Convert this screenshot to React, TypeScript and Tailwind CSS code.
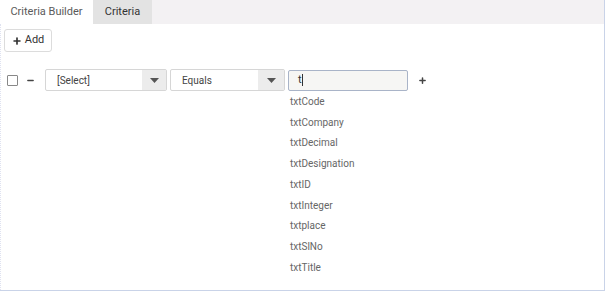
import { Plus, Minus } from 'lucide-react';

const fields = [
  'txtCode',
  'txtCompany',
  'txtDecimal',
  'txtDesignation',
  'txtID',
  'txtInteger',
  'txtplace',
  'txtSlNo',
  'txtTitle',
];

function Caret() {
  return (
    <svg width="9" height="5" viewBox="0 0 9 5" className="fill-[#555]">
      <path d="M0 0h9L4.5 5z" />
    </svg>
  );
}

export default function App() {
  return (
    <div className="w-[606px] h-[294px] bg-white font-['Roboto',sans-serif] text-[11px] text-[#444]">
      <div className="w-[605px] h-[291px] border-r border-b border-[#c9d3e8] flex flex-col">
        <div className="flex h-[24px] bg-[#f3f1f3]">
          <div className="w-[93px] bg-white flex items-center justify-center text-[#5a5a5a]">
            Criteria Builder
          </div>
          <div className="w-[59px] bg-[#e3e3e3] flex items-center justify-center text-[#333]">
            Criteria
          </div>
        </div>

        <div className="flex-1 border-l border-dotted border-[#dfe2f0] px-[3px] pt-[5px]">
          <button className="h-[23px] w-[48px] rounded-[3px] border border-[#dcdcdc] flex items-center justify-center gap-[3px] text-[#333]">
            <Plus className="w-[10px] h-[10px]" strokeWidth={4} />
            Add
          </button>

          <div className="flex items-center h-[22px] mt-[17px]">
            <div className="ml-[3px] w-[11px] h-[11px] border border-[#888] rounded-[1px]" />
            <Minus className="ml-[8px] w-[9px] h-[9px] text-[#444]" strokeWidth={4} />
            <div className="ml-[10px] w-[122px] h-[22px] border border-[#d6d6d6] rounded-[2px] flex">
              <span className="flex-1 flex items-center pl-[11px] text-[10px] text-[#444]">[Select]</span>
              <span className="w-[24px] bg-[#ececec] flex items-center justify-center">
                <Caret />
              </span>
            </div>
            <div className="ml-[3px] w-[115px] h-[22px] border border-[#d6d6d6] rounded-[2px] flex">
              <span className="flex-1 flex items-center pl-[11px] text-[10px] text-[#444]">Equals</span>
              <span className="w-[26px] bg-[#ececec] flex items-center justify-center">
                <Caret />
              </span>
            </div>
            <div className="ml-[3px] w-[120px] h-[21px] border border-[#a9b4c8] rounded-[2px] bg-[#f6f6f4] flex items-center pl-[9px] text-[#333]">
              t<span className="w-px h-[12px] bg-[#333]" />
            </div>
            <Plus className="ml-[10px] w-[9px] h-[9px] text-[#444]" strokeWidth={4} />
          </div>

          <div className="ml-[286px] flex flex-col">
            {fields.map((f) => (
              <div key={f} className="h-[20.75px] flex items-center text-[10px] text-[#666]">
                {f}
              </div>
            ))}
          </div>
        </div>
      </div>
    </div>
  );
}
